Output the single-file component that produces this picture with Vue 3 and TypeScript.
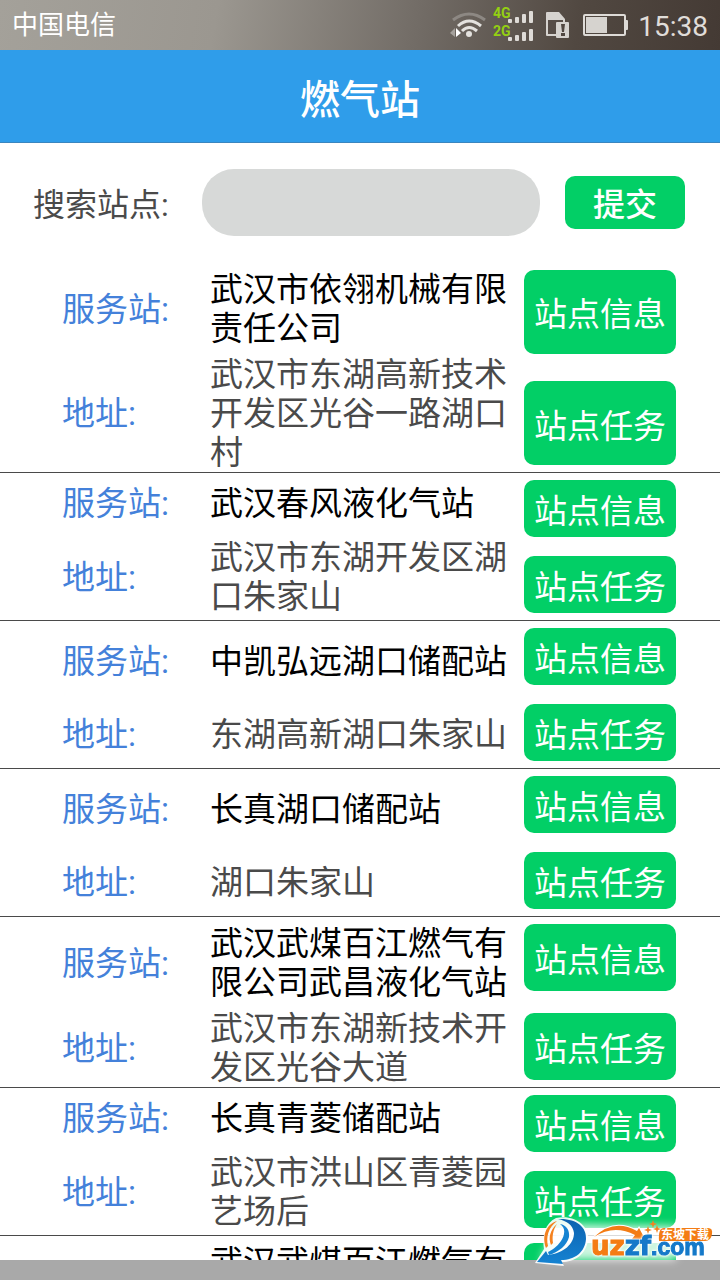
<script setup lang="ts">
import { ref } from 'vue'

interface Station {
  name: string
  address: string
}

const keyword = ref('')

const stations: Station[] = [
  { name: '武汉市依翎机械有限责任公司', address: '武汉市东湖高新技术开发区光谷一路湖口村' },
  { name: '武汉春风液化气站', address: '武汉市东湖开发区湖口朱家山' },
  { name: '中凯弘远湖口储配站', address: '东湖高新湖口朱家山' },
  { name: '长真湖口储配站', address: '湖口朱家山' },
  { name: '武汉武煤百江燃气有限公司武昌液化气站', address: '武汉市东湖新技术开发区光谷大道' },
  { name: '长真青菱储配站', address: '武汉市洪山区青菱园艺场后' },
]

const nextStation = '武汉武煤百江燃气有'
</script>

<template>
  <div class="screen">
    <div class="status">
      <span class="carrier">中国电信</span>
      <svg class="status-icons" width="178" height="50" viewBox="0 0 178 50" aria-hidden="true">
        <g fill="none">
          <path d="M3 20 Q19 8 35 20" stroke="#8d8883" stroke-width="3" />
          <path d="M8 26 Q19 16 31 26" stroke="#e4e2df" stroke-width="3" />
          <path d="M12 31 Q19 24 27 31" stroke="#e4e2df" stroke-width="3" />
        </g>
        <circle cx="19" cy="34" r="3" fill="#e4e2df" />
        <path d="M5 28 v9 l-5 -4z" fill="#a5a19c" />
        <path d="M6 28 v9 l5 -4z" fill="#fff" />
        <g class="net">
          <text x="43" y="18">4G</text>
          <text x="43" y="36">2G</text>
        </g>
        <g fill="#dedbd7">
          <rect x="58" y="19" width="4" height="4" rx="1" /><rect x="65" y="17" width="4" height="6" rx="1" />
          <rect x="72" y="14" width="4" height="9" rx="1" /><rect x="79" y="11" width="4" height="12" rx="1" />
          <rect x="58" y="37" width="4" height="4" rx="1" /><rect x="65" y="35" width="4" height="6" rx="1" />
          <rect x="72" y="32" width="4" height="9" rx="1" /><rect x="79" y="29" width="4" height="12" rx="1" />
        </g>
        <path d="M97 12 h12 l6 7 v17 h-18 q-1 0 -1 -1 v-22 q0 -1 1 -1z" fill="#d6d3cf" />
        <rect x="98" y="20" width="15" height="14" fill="#574e48" />
        <rect x="106" y="22" width="13" height="16" rx="1" fill="#d6d3cf" />
        <path d="M111 24 h4 l-1 8 h-2z M111 33 h4 v3 h-4z" fill="#514842" />
        <rect x="134" y="15" width="41" height="20" rx="1" fill="none" stroke="#dedbd7" stroke-width="2" />
        <rect x="136" y="17" width="21" height="16" fill="#d6d3cf" />
        <rect x="175" y="20" width="3" height="10" rx="1" fill="#dedbd7" />
      </svg>
      <span class="clock">15:38</span>
    </div>

    <header class="title-bar"><h1>燃气站</h1></header>

    <form class="search" @submit.prevent>
      <label for="keyword">搜索站点:</label>
      <input id="keyword" v-model="keyword" type="text" />
      <button type="submit">提交</button>
    </form>

    <main class="list">
      <section v-for="station in stations" :key="station.name" class="station">
        <span class="label">服务站:</span>
        <span class="name">{{ station.name }}</span>
        <span class="label">地址:</span>
        <span class="address">{{ station.address }}</span>
        <div class="actions">
          <button type="button">站点信息</button>
          <button type="button">站点任务</button>
        </div>
      </section>
      <section class="station">
        <span class="name">{{ nextStation }}</span>
        <div class="actions">
          <button type="button" aria-label="站点信息"></button>
        </div>
      </section>
    </main>

    <div class="bottom-bar"></div>

    <svg class="brand" width="190" height="70" viewBox="0 0 190 70" role="img" aria-label="uzzf.com 东坡下载">
      <defs>
        <filter id="glow" x="-20%" y="-40%" width="140%" height="180%"><feGaussianBlur stdDeviation="4" /></filter>
        <linearGradient id="swirl" x1="0" y1="0" x2="0" y2="1">
          <stop offset="0" stop-color="#0d62b0" /><stop offset="1" stop-color="#1583d2" />
        </linearGradient>
      </defs>
      <path d="M30 14 L146 16 V50 H10z" fill="#fff" opacity="0.8" filter="url(#glow)" />
      <path d="M26 8 C44 4 60 16 58 30 C56 45 44 52 32 52 L34 56 L5 53 L14 39 C12 26 15 13 26 8z" fill="#fff" opacity="0.9" />
      <path d="M27 11 C15 15 12 27 16 38 L18 36 C16 27 18 18 27 11z" fill="#f58220" />
      <path d="M27 14 C20 20 18 28 21 35 L23 33 C22 26 23 20 27 14z" fill="#f58220" />
      <path d="M28 9 C46 8 57 17 56 29 C55 42 45 50 31 50 L33 54 L7 52 L16 41 L18 45 C34 43 44 34 44 23 C43 15 37 11 28 9z" fill="url(#swirl)" />
      <path d="M30 14 C36 18 35 25 31 31 C27 37 22 40 18 42 L19 45 C29 42 37 35 39 27 C40 20 36 15 30 14z" fill="#1583d2" />
      <path d="M64 27 Q84 8 107 21 L109 18 L115 29 L102 29 L105 25 Q84 14 64 27z" fill="#f47c14" stroke="#fff" stroke-width="2" paint-order="stroke" />
      <text class="wordmark" x="61" y="45"><tspan class="orange">uz</tspan><tspan class="blue">zf</tspan><tspan class="domain blue">.com</tspan></text>
      <g fill="#f58220">
        <path d="M118 16 l1 3 3 1 -3 1 -1 3 -1 -3 -3 -1 3 -1z" />
        <path d="M123 10 l1 3 3 1 -3 1 -1 3 -1 -3 -3 -1 3 -1z" />
        <path d="M127 15 l1 3 3 1 -3 1 -1 3 -1 -3 -3 -1 3 -1z" />
      </g>
      <path d="M134 18 H178 Q183 18 182 24 Q181 31 175 31 H129 Q128 18 134 18z" fill="#f47c14" />
      <text class="tagline" x="131" y="29">东坡下载</text>
    </svg>
  </div>
</template>

<style>
body { background: #fff; }
</style>

<style scoped>
.screen {
  position: relative;
  display: flex;
  flex-direction: column;
  height: 100vh;
  overflow: hidden;
  background: #fff;
  color: #4a4a4a;
  font-family: Roboto, "Noto Sans CJK SC", sans-serif;
  font-size: 33px;
  line-height: 39px;
}
.status {
  flex: none;
  display: flex;
  align-items: center;
  height: 50px;
  padding: 0 12px;
  background: linear-gradient(100deg, #a4a19a 0%, #9b9790 30%, #726c66 58%, #514841 80%, #443a34 100%);
  color: #fff;
}
.carrier { font-size: 26px; }
.status-icons { margin-left: auto; }
.net { fill: #94d012; font: bold 14px Roboto, sans-serif; }
.clock { margin-left: 10px; padding-top: 2px; font-size: 28px; color: #e0ddd9; }
.title-bar {
  flex: none;
  display: flex;
  align-items: center;
  justify-content: center;
  height: 92px;
  background: #2f9dea;
  border-bottom: 1px solid #3a86bf;
  color: #fff;
}
h1 { margin: 0; padding-top: 10px; font-size: 40px; font-weight: 500; line-height: 48px; }
button {
  padding: 6px 0 0;
  border: 0;
  border-radius: 10px;
  background: #02cf66;
  color: #fff;
  font: inherit;
}
.search {
  flex: none;
  display: flex;
  align-items: center;
  padding: 26px 35px 27px 33px;
  font-size: 32px;
}
.search label { flex: none; width: 169px; padding-top: 6px; }
.search input {
  flex: 1;
  min-width: 0;
  height: 67px;
  box-sizing: border-box;
  padding: 0 30px;
  border: 0;
  border-radius: 32px;
  background: #d7d9d8;
  font: inherit;
}
.search button { flex: none; width: 120px; height: 53px; margin-left: 25px; font-weight: 500; }
.list { flex: 1; min-height: 0; overflow: hidden; }
.station {
  display: grid;
  grid-template-columns: 148px 1fr 152px;
  row-gap: 7px;
  align-items: center;
  padding: 7px 44px 0 62px;
  border-bottom: 1px solid #4a4a4a;
}
.label { grid-column: 1; color: #4481da; }
.name, .address { grid-column: 2; margin-right: 16px; }
.name { color: #000; }
.station:last-child { align-items: start; }
.actions {
  grid-column: 3;
  grid-row: 1 / 3;
  align-self: stretch;
  display: grid;
  grid-template-rows: 3fr 1fr 3fr;
  padding-bottom: 7px;
}
.actions button { min-height: 57px; }
.actions button:nth-child(2) { grid-row: 3; }
.bottom-bar { flex: none; height: 20px; background: #a9a9a9; }
.brand { position: absolute; right: 0; bottom: 0; }
.wordmark {
  font: bold 26px "DejaVu Sans", sans-serif;
  filter: drop-shadow(0 0 1px #fff) drop-shadow(0 0 1px #fff);
}
.orange { fill: #f47c14; stroke: #f47c14; stroke-width: 1px; }
.blue { fill: #1579c9; stroke: #1579c9; stroke-width: 1px; }
.domain { font: bold 23px "Liberation Sans", sans-serif; }
.tagline { fill: #fff; font: bold 12px "Noto Sans CJK SC", sans-serif; }
</style>
